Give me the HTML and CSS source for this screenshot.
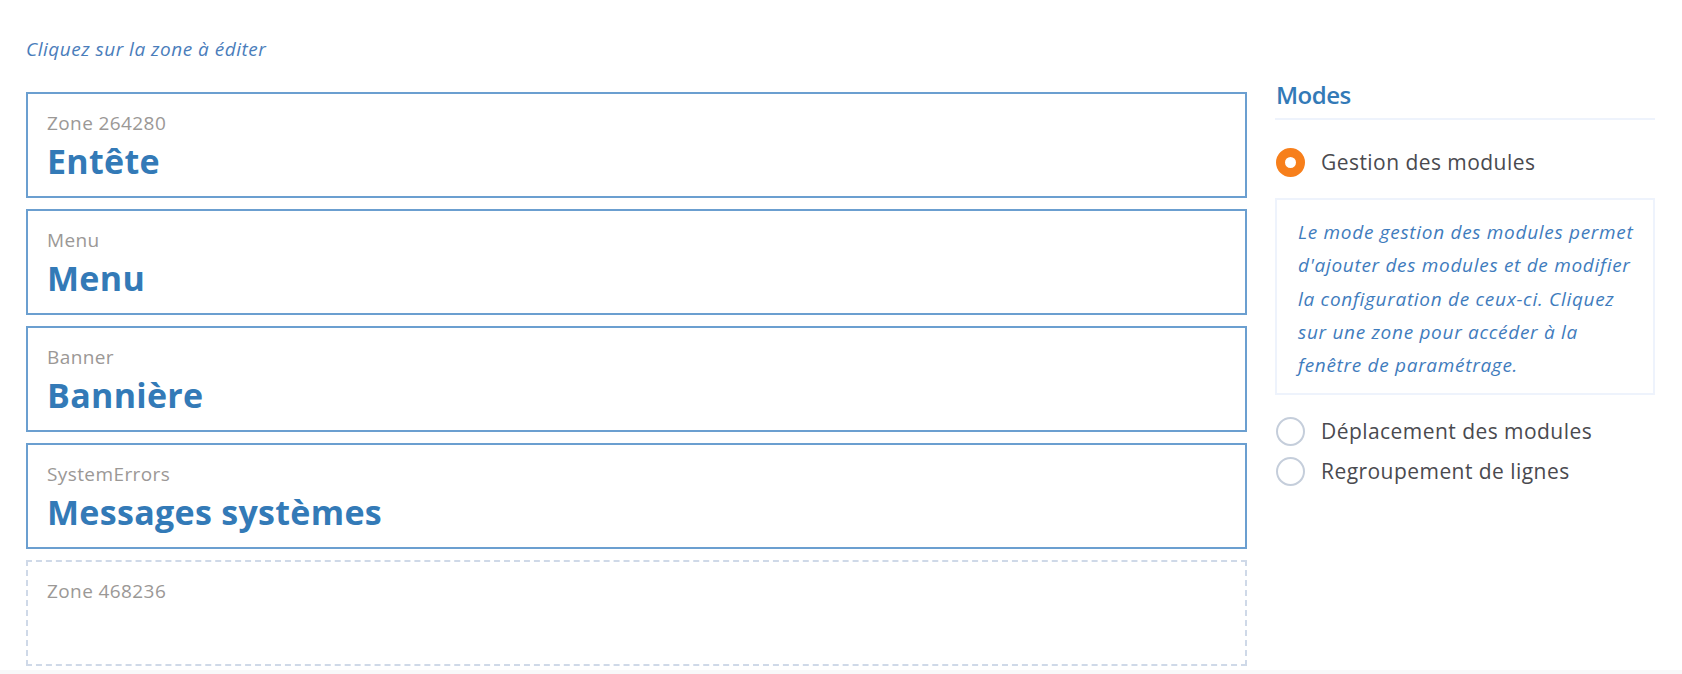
FILE: index.html
```html
<!DOCTYPE html>
<html lang="fr">
<head>
<meta charset="utf-8">
<title>Zones</title>
<link rel="stylesheet" href="styles.css">
</head>
<body>
<div class="page">
  <main class="zones">
    <p class="hint">Cliquez sur la zone à éditer</p>
    <div class="zone">
      <div class="zone-id">Zone 264280</div>
      <div class="zone-name">Entête</div>
    </div>
    <div class="zone">
      <div class="zone-id">Menu</div>
      <div class="zone-name">Menu</div>
    </div>
    <div class="zone">
      <div class="zone-id">Banner</div>
      <div class="zone-name">Bannière</div>
    </div>
    <div class="zone">
      <div class="zone-id">SystemErrors</div>
      <div class="zone-name">Messages systèmes</div>
    </div>
    <div class="zone zone-empty">
      <div class="zone-id">Zone 468236</div>
    </div>
  </main>
  <aside class="modes">
    <h2 class="modes-title">Modes</h2>
    <div class="mode mode-active">
      <span class="radio"></span>
      <span class="mode-label">Gestion des modules</span>
    </div>
    <div class="mode-help">Le mode gestion des modules permet<br>d'ajouter des modules et de modifier<br>la configuration de ceux-ci. Cliquez<br>sur une zone pour accéder à la<br>fenêtre de paramétrage.</div>
    <div class="mode mode-second">
      <span class="radio"></span>
      <span class="mode-label">Déplacement des modules</span>
    </div>
    <div class="mode mode-third">
      <span class="radio"></span>
      <span class="mode-label">Regroupement de lignes</span>
    </div>
  </aside>
</div>
</body>
</html>
```
FILE: styles.css
```css
html, body {
  margin: 0;
  padding: 0;
}

body {
  background: #f8f8f9;
  font-family: "Open Sans", Lato, "Liberation Sans", sans-serif;
}

.page {
  display: flex;
  gap: 28px;
  padding: 37px 27px 4px 26px;
  background: #ffffff;
}

.zones {
  flex: 1;
  display: flex;
  flex-direction: column;
  gap: 11px;
  min-width: 0;
}

.hint {
  margin: 0 0 20px;
  font-size: 19px;
  line-height: 24px;
  letter-spacing: 0.5px;
  font-style: italic;
  color: #4a7dbb;
}

.zone {
  box-sizing: border-box;
  height: 106px;
  border: 2px solid #6b9fd0;
  padding: 18px 19px 14px;
}

.zone-empty {
  border: 2px dashed #cfd9e8;
}

.zone-id {
  font-size: 19px;
  line-height: 22px;
  letter-spacing: 0.4px;
  color: #9b9896;
}

.zone-name {
  margin-top: 6px;
  font-size: 34px;
  line-height: 42px;
  letter-spacing: 0.3px;
  font-weight: 700;
  color: #337ab7;
}

.modes {
  flex: none;
  width: 380px;
  margin-top: 43px;
}

.modes-title {
  margin: 0;
  padding: 0 0 8px 1px;
  font-size: 24px;
  line-height: 30px;
  letter-spacing: -0.5px;
  font-weight: 600;
  color: #337ab7;
  border-bottom: 2px solid #eef3fc;
}

.mode {
  display: flex;
  align-items: center;
  gap: 16px;
  height: 29px;
  padding-left: 1px;
}

.mode-active {
  margin-top: 28px;
  margin-bottom: 21px;
}

.mode-second {
  margin-top: 22px;
}

.mode-third {
  margin-top: 11px;
}

.radio {
  box-sizing: border-box;
  width: 29px;
  height: 29px;
  border-radius: 50%;
  border: 2px solid #c5cedb;
  background: #ffffff;
  flex: none;
}

.mode-active .radio {
  border: 9px solid #f77f1b;
}

.mode-label {
  font-size: 21px;
  line-height: 29px;
  letter-spacing: 0.45px;
  color: #4a4a4f;
}

.mode-help {
  border: 2px solid #eef3fc;
  padding: 16px 10px 10px 21px;
  font-size: 19px;
  line-height: 33.33px;
  letter-spacing: 0.7px;
  font-style: italic;
  color: #3f7cbd;
}
```
